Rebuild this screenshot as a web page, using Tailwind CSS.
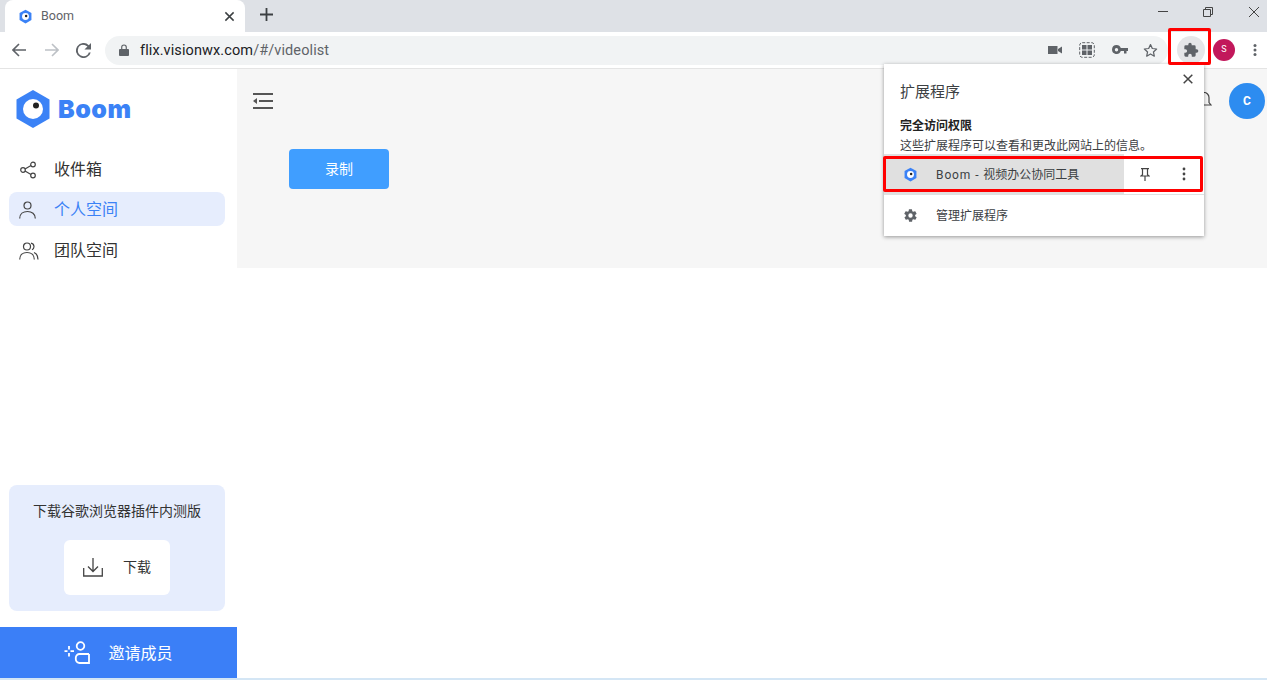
<!DOCTYPE html>
<html lang="zh-CN">
<head>
<meta charset="UTF-8">
<title>Boom</title>
<script src="https://cdn.jsdelivr.net/npm/@tailwindcss/browser@4"></script>
</head>
<body class="relative w-[1267px] h-[680px] overflow-hidden bg-white font-['Roboto','Noto_Sans_CJK_SC',sans-serif] text-[#333]">

<!-- tab strip -->
<div class="h-[32px] bg-[#dee1e6] flex items-end relative">
  <div class="ml-[5px] w-[240px] h-[32px] bg-white rounded-t-[8px] flex items-center pl-[13px] pr-[10px]">
    <svg class="w-[15px] h-[15px]" viewBox="0 0 24 24"><path d="M12 1l9.500 5.500v11L12 23l-9.500-5.500v-11z" fill="#3b82f6"/><circle cx="12" cy="12" r="5.500" fill="#fff"/><circle cx="13" cy="11" r="2" fill="#222"/></svg>
    <span class="ml-[8px] text-[12.5px] text-[#5f6368]">Boom</span>
    <svg class="ml-auto w-[11px] h-[11px]" viewBox="0 0 12 12"><path d="M1.500 1.500l9 9M10.500 1.500l-9 9" stroke="#3c4043" stroke-width="1.600"/></svg>
  </div>
  <svg class="ml-[15px] mb-[11px] w-[13px] h-[13px]" viewBox="0 0 13 13"><path d="M6.500 0v13M0 6.500h13" stroke="#3c4043" stroke-width="1.800"/></svg>
  <div class="ml-auto flex items-center self-start pt-[7px] pr-[8px]">
    <svg class="w-[10px] h-[10px]" viewBox="0 0 10 10"><path d="M0 4.500h10" stroke="#444" stroke-width="1"/></svg>
    <svg class="ml-[35px] w-[10px] h-[10px]" viewBox="0 0 10 10" fill="none"><path d="M.5 2.500h7v7h-7zM2.500 2.500v-2h7v7h-2" stroke="#444"/></svg>
    <svg class="ml-[36px] w-[10px] h-[10px]" viewBox="0 0 10 10"><path d="M0 0l10 10M10 0L0 10" stroke="#444"/></svg>
  </div>
</div>

<!-- toolbar -->
<div class="h-[37px] border-b border-[#e4e4e4] flex items-center">
  <div class="ml-[12px] flex items-center">
    <svg class="w-[14px] h-[14px]" viewBox="0 0 14 14" fill="none"><path d="M14 7H1.500M7 1L1 7l6 6" stroke="#5f6368" stroke-width="1.600"/></svg>
    <svg class="ml-[19px] w-[14px] h-[14px]" viewBox="0 0 14 14" fill="none"><path d="M0 7h12.500M7 1l6 6-6 6" stroke="#bdc1c6" stroke-width="1.600"/></svg>
    <svg class="ml-[17px] w-[15px] h-[15px]" viewBox="4 4 16 16"><path d="M17.650 6.350A8 8 0 1 0 19.730 14h-2.080A6 6 0 1 1 12 6c1.660 0 3.140.69 4.220 1.780L13 11h7V4z" fill="#5f6368"/></svg>
  </div>
  <div class="ml-[14px] w-[1063px] h-[29px] bg-[#f1f3f4] rounded-full flex items-center pl-[14px] pr-[10px]">
    <svg class="w-[10px] h-[12px]" viewBox="0 0 11 13"><path d="M1 5.500h9a1 1 0 0 1 1 1V12a1 1 0 0 1-1 1H1a1 1 0 0 1-1-1V6.500a1 1 0 0 1 1-1z" fill="#5f6368"/><path d="M3 6V3.500a2.500 2.500 0 0 1 5 0V6" fill="none" stroke="#5f6368" stroke-width="1.300"/></svg>
    <span class="ml-[11px] pt-[1px] text-[14.500px] tracking-[0.1px] text-[#202124]">flix.visionwx.com<span class="text-[#5f6368]">/#/videolist</span></span>
    <div class="ml-auto flex items-center gap-[17px]">
      <svg class="w-[14px] h-[14px]" viewBox="0 0 14 14"><path d="M0 3h9.500v8H0zM10 6l4-2.500v7L10 8z" fill="#5f6368"/></svg>
      <svg class="w-[16px] h-[16px]" viewBox="0 0 16 16" fill="none"><rect x=".7" y=".7" width="14.600" height="14.600" rx="2.500" stroke="#5f6368" stroke-dasharray="3 1.500"/><path d="M3 3h4.500v4.500H3zM8.500 3H13v4.500H8.500zM3 8.500h4.500V13H3zM8.500 8.500H13V13H8.500z" fill="#5f6368"/></svg>
      <svg class="w-[16px] h-[10px]" viewBox="0 0 16 10"><path d="M4.500 0a4.500 4.500 0 0 1 4.300 3H16v3h-1.500v2.500h-2.500V6H8.800A4.500 4.500 0 1 1 4.500 0zm0 3a1.700 1.700 0 1 0 0 3.400 1.700 1.700 0 0 0 0-3.400z" fill="#5f6368"/></svg>
      <svg class="-ml-[2px] w-[15px] h-[15px]" viewBox="0 0 24 24" fill="none"><path d="M12 2.500l2.900 6.300 6.900.8-5.100 4.700 1.400 6.800L12 17.600l-6.100 3.500 1.400-6.800L2.200 9.600l6.900-.8z" stroke="#5f6368" stroke-width="2" stroke-linejoin="round"/></svg>
    </div>
  </div>
  <div class="ml-[9px] w-[28px] h-[28px] rounded-full bg-[#e5e6e8] flex items-center justify-center">
    <svg class="w-[16px] h-[16px]" viewBox="0 0 24 24"><path d="M20.500 11H19V7a2 2 0 0 0-2-2h-4V3.500a2.500 2.500 0 0 0-5 0V5H4a2 2 0 0 0-2 2v3.800h1.500a2.700 2.700 0 0 1 0 5.400H2V20a2 2 0 0 0 2 2h3.800v-1.500a2.700 2.700 0 0 1 5.400 0V22H17a2 2 0 0 0 2-2v-4h1.500a2.500 2.500 0 0 0 0-5z" fill="#5f6368"/></svg>
  </div>
  <div class="ml-[8px] w-[22px] h-[22px] rounded-full bg-[#c2185b] flex items-center justify-center text-white text-[9px]">S</div>
  <svg class="ml-[18px] w-[4px] h-[14px]" viewBox="0 0 4 14"><circle cx="2" cy="2.500" r="1.500" fill="#5f6368"/><circle cx="2" cy="7" r="1.500" fill="#5f6368"/><circle cx="2" cy="11.500" r="1.500" fill="#5f6368"/></svg>
</div>

<!-- page -->
<div class="flex h-[609px]">
  <aside class="w-[237px] flex flex-col shrink-0">
    <div class="h-[83px] pl-[16px] pt-[21px]">
      <div class="flex items-center h-[38px]">
        <svg class="w-[34px] h-[38px]" viewBox="0 0 34 38"><path d="M17 0l16.500 9.500v19L17 38 .5 28.500v-19z" fill="#3b82f6"/><circle cx="17" cy="19" r="10" fill="#fff"/><circle cx="20" cy="15.500" r="3" fill="#222"/></svg>
        <span class="ml-[8px] text-[25px] tracking-[0.5px] font-black font-['Inter'] text-[#3b82f6] leading-none">Boom</span>
      </div>
    </div>
    <nav class="pl-[9px] pr-[12px] flex flex-col">
      <a class="h-[34px] flex items-center pt-[2px] pl-[11px] text-[16px] text-[#333]">
        <svg class="w-[16px] h-[18px]" viewBox="0 0 16 18" fill="none" stroke="#444" stroke-width="1.200"><circle cx="3" cy="9" r="2.300"/><circle cx="13" cy="3.500" r="2.300"/><circle cx="13" cy="14.500" r="2.300"/><path d="M5 8l6-3.400M5 10l6 3.400"/></svg>
        <span class="ml-[18px]">收件箱</span>
      </a>
      <a class="mt-[6px] h-[34px] flex items-center pt-[2px] pl-[11px] rounded-[8px] bg-[#e6edfd] text-[16px] text-[#3b82f6]">
        <svg class="w-[17px] h-[18px] -ml-[1px]" viewBox="0 0 17 18" fill="none" stroke="#444" stroke-width="1.200"><circle cx="8.500" cy="4.500" r="3.500"/><path d="M.7 17.500c0-4.500 3.500-7 7.800-7s7.800 2.500 7.800 7"/></svg>
        <span class="ml-[18px]">个人空间</span>
      </a>
      <a class="mt-[7px] h-[34px] flex items-center pt-[2px] pl-[10px] text-[16px] text-[#333]">
        <svg class="w-[20px] h-[18px]" viewBox="0 0 20 18" fill="none" stroke="#444" stroke-width="1.200"><circle cx="8" cy="4.500" r="3.500"/><path d="M.7 17.500c0-4.500 3.200-7 7.300-7s7.300 2.500 7.300 7M12 1.200a3.500 3.500 0 0 1 1 6.600M15 10.500c2.500 1 4 3.500 4 7"/></svg>
        <span class="ml-[15px]">团队空间</span>
      </a>
    </nav>
    <div class="mt-auto ml-[9px] mr-[12px] h-[126px] rounded-[8px] bg-[#e6edfd] flex flex-col items-center pt-[15px]">
      <p class="text-[14px] leading-[22px] text-[#333]">下载谷歌浏览器插件内测版</p>
      <div class="mt-[18px] w-[106px] h-[55px] bg-white rounded-[6px] flex items-center justify-center gap-[20px]">
        <svg class="w-[20px] h-[19px]" viewBox="0 0 20 19" fill="none" stroke="#444" stroke-width="1.300"><path d="M10 0v13M5 8.500l5 5 5-5M.7 10v8h18.600v-8"/></svg>
        <span class="text-[14px] text-[#333]">下载</span>
      </div>
    </div>
    <div class="mt-[16px] h-[51px] bg-[#3b7ff7] flex items-center justify-center text-white">
      <svg class="w-[26px] h-[24px]" viewBox="0 0 26 24" fill="none" stroke="#fff" stroke-width="1.800"><circle cx="16.500" cy="5" r="3.800"/><path d="M25 13h-9.500a3.700 3.700 0 0 0-3.700 3.700v1.600a3.700 3.700 0 0 0 3.700 3.700H25v-9"/><path d="M5 5v3.500M5 12v3.500M.5 10.200h3M6.500 10.200h3.500"/></svg>
      <span class="ml-[18px] pt-[2px] text-[16px]">邀请成员</span>
    </div>
  </aside>
  <main class="flex-1 flex flex-col">
    <div class="h-[199px] bg-[#f6f6f6] pl-[16px] pt-[24px]">
      <svg class="w-[20px] h-[16px]" viewBox="0 0 20 16"><path d="M0 1h20M6 8h14M0 15h20" stroke="#555" stroke-width="1.800"/><path d="M0 8l4-3v6z" fill="#555"/></svg>
      <button class="mt-[40px] ml-[36px] block w-[100px] h-[40px] rounded-[4px] bg-[#409eff] text-white text-[14px]">录制</button>
    </div>
  </main>
</div>
<div class="h-[2px] bg-[#d4e6f5]"></div>

<!-- avatar and bell partly under the popup -->
<div class="absolute left-[1229px] top-[83px] w-[36px] h-[36px] rounded-full bg-[#2d8cf0] flex items-center justify-center text-white text-[12px] font-bold">C</div>
<svg class="absolute left-[1198px] top-[92px] w-[14px] h-[15px]" viewBox="0 0 14 15" fill="none"><path d="M6 .5a5 5 0 0 1 5 5v5l2 2.500H2" stroke="#444" stroke-width="1.200"/></svg>

<!-- extensions popup -->
<div class="absolute left-[884px] top-[64px] w-[320px] h-[172px] bg-white shadow-[0_1px_4px_rgba(0,0,0,0.4)] text-[#3c4043]">
  <svg class="absolute right-[11px] top-[10px] w-[10px] h-[10px]" viewBox="0 0 10 10"><path d="M.7.7l8.600 8.600M9.300.7L.7 9.300" stroke="#444" stroke-width="1.500"/></svg>
  <p class="pl-[16px] pt-[18px] text-[15px] leading-[20px]">扩展程序</p>
  <p class="pl-[16px] mt-[16px] text-[12px] leading-[16px] font-bold text-[#222]">完全访问权限</p>
  <p class="pl-[16px] mt-[4px] text-[12px] leading-[16px]">这些扩展程序可以查看和更改此网站上的信息。</p>
  <div class="h-[41px] flex items-center border-b border-[#e0e0e0]">
    <div class="w-[240px] h-full bg-[#e0e0e0] flex items-center pt-[1px] pl-[19px]">
      <svg class="w-[15px] h-[15px]" viewBox="0 0 24 24"><path d="M12 1l9.500 5.500v11L12 23l-9.500-5.500v-11z" fill="#3b82f6"/><circle cx="12" cy="12" r="5.500" fill="#fff"/><circle cx="13" cy="11" r="2" fill="#222"/></svg>
      <span class="ml-[18px] text-[12px]"><span class="tracking-[0.9px]">Boom - </span>视频办公协同工具</span>
    </div>
    <svg class="ml-[16px] w-[10px] h-[13px]" viewBox="0 0 10 13" fill="none" stroke="#444" stroke-width="1.200"><path d="M1 .6h8M2.500.6v6L.8 8h8.400L7.500 6.600v-6M5 8v5"/></svg>
    <svg class="ml-[32px] w-[4px] h-[14px]" viewBox="0 0 4 14"><circle cx="2" cy="2" r="1.400" fill="#444"/><circle cx="2" cy="7" r="1.400" fill="#444"/><circle cx="2" cy="12" r="1.400" fill="#444"/></svg>
  </div>
  <div class="h-[41px] flex items-center pl-[19px]">
    <svg class="w-[15px] h-[15px]" viewBox="0 0 24 24"><path d="M19.400 13a7.500 7.500 0 0 0 0-2l2.100-1.600a.5.5 0 0 0 .1-.6l-2-3.500a.5.5 0 0 0-.6-.2l-2.500 1a7.300 7.300 0 0 0-1.700-1l-.4-2.600a.5.5 0 0 0-.5-.4h-4a.5.500 0 0 0-.5.400l-.4 2.600a7.300 7.300 0 0 0-1.700 1l-2.500-1a.5.500 0 0 0-.6.200l-2 3.500a.5.500 0 0 0 .1.600L4.600 11a7.500 7.500 0 0 0 0 2l-2.100 1.600a.5.500 0 0 0-.1.600l2 3.500c.1.200.4.300.6.200l2.500-1c.5.400 1.100.7 1.700 1l.4 2.600c0 .2.200.4.500.4h4c.3 0 .5-.2.500-.4l.4-2.600a7.300 7.300 0 0 0 1.700-1l2.500 1c.2.100.5 0 .6-.2l2-3.500a.5.500 0 0 0-.1-.6zM12 15.500a3.500 3.500 0 1 1 0-7 3.500 3.500 0 0 1 0 7z" fill="#5f6368"/></svg>
    <span class="ml-[18px] text-[12px]">管理扩展程序</span>
  </div>
</div>

<!-- red annotation boxes -->
<div class="absolute left-[1168px] top-[28px] w-[43px] h-[37px] border-[3px] border-[#ff0000] rounded-[2px]"></div>
<div class="absolute left-[883px] top-[156px] w-[320px] h-[36px] border-[3px] border-[#ff0000] rounded-[2px]"></div>
</body>
</html>
